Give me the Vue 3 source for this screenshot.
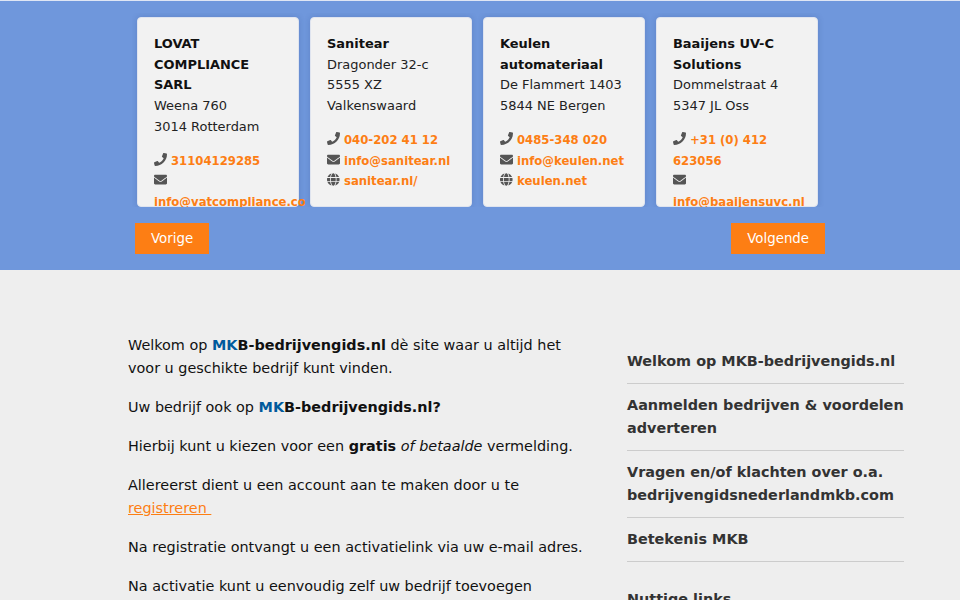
<script setup>
const phone = 'M493.4 24.6l-104-24c-11.3-2.6-22.9 3.3-27.5 13.9l-48 112c-4.2 9.8-1.4 21.3 6.9 28l60.6 49.6c-36 76.7-98.9 140.5-177.2 177.2l-49.6-60.6c-6.8-8.3-18.2-11.1-28-6.9l-112 48C3.9 366.5-2 378.1.6 389.4l24 104C27.1 504.2 36.7 512 48 512c256.1 0 464-207.5 464-464 0-11.2-7.7-20.9-18.6-23.4z'
const mail = 'M502.3 190.8c3.9-3.1 9.7-.2 9.7 4.7V400c0 26.5-21.5 48-48 48H48c-26.5 0-48-21.5-48-48V195.6c0-5 5.7-7.8 9.7-4.7 22.4 17.4 52.1 39.5 154.1 113.6 21.1 15.4 56.7 47.8 92.2 47.6 35.7.3 72-32.8 92.3-47.6 102-74.1 131.6-96.3 154-113.7zM256 320c23.2.4 56.6-29.2 73.4-41.4 132.7-96.3 142.8-104.7 173.4-128.7 5.8-4.5 9.2-11.5 9.2-18.9v-19c0-26.5-21.5-48-48-48H48C21.5 64 0 85.5 0 112v19c0 7.4 3.4 14.3 9.2 18.9 30.6 23.9 40.7 32.4 173.4 128.7 16.8 12.2 50.2 41.8 73.4 41.4z'
const globe = 'M336.5 160C322 70.7 287.8 8 248 8s-74 62.7-88.5 152h177zM152 256c0 22.2 1.2 43.5 3.3 64h185.3c2.1-20.5 3.3-41.8 3.3-64s-1.2-43.5-3.3-64H155.3c-2.1 20.5-3.3 41.8-3.3 64zm324.7-96c-28.6-67.9-86.5-120.4-158-141.6 24.4 33.8 41.2 84.7 50 141.6h108zM177.2 18.4C105.8 39.6 47.8 92.1 19.3 160h108c8.7-56.9 25.5-107.8 49.9-141.6zM487.4 192H372.7c2.1 21 3.3 42.5 3.3 64s-1.2 43-3.3 64h114.6c5.5-20.5 8.6-41.8 8.6-64s-3.1-43.5-8.5-64zM120 256c0-21.5 1.2-43 3.3-64H8.6C3.2 212.5 0 233.8 0 256s3.2 43.5 8.6 64h114.6c-2-21-3.2-42.5-3.2-64zm39.5 96c14.5 89.3 48.7 152 88.5 152s74-62.7 88.5-152h-177zm159.3 141.6c71.4-21.2 129.4-73.7 158-141.6h-108c-8.8 56.9-25.6 107.8-50 141.6zM19.3 352c28.6 67.9 86.5 120.4 158 141.6-24.4-33.8-41.2-84.7-50-141.6h-108z'

const cards = [
  { name: 'LOVAT COMPLIANCE SARL', addr: ['Weena 760', '3014 Rotterdam'], tel: '31104129285', mail: 'info@vatcompliance.com' },
  { name: 'Sanitear', addr: ['Dragonder 32-c', '5555 XZ Valkenswaard'], tel: '040-202 41 12', mail: 'info@sanitear.nl', web: 'sanitear.nl/' },
  { name: 'Keulen automateriaal', addr: ['De Flammert 1403', '5844 NE Bergen'], tel: '0485-348 020', mail: 'info@keulen.net', web: 'keulen.net' },
  { name: 'Baaijens UV-C Solutions', addr: ['Dommelstraat 4', '5347 JL Oss'], tel: '+31 (0) 412 623056', mail: 'info@baaijensuvc.nl' }
]
const links = [
  'Welkom op MKB-bedrijvengids.nl',
  'Aanmelden bedrijven & voordelen adverteren',
  'Vragen en/of klachten over o.a. bedrijvengidsnederlandmkb.com',
  'Betekenis MKB'
]
</script>

<template>
  <div class="page">
    <section class="hero">
      <div class="slides">
        <div v-for="c in cards" :key="c.name" class="slide">
          <article class="card">
            <strong class="name">{{ c.name }}</strong>
            <div v-for="a in c.addr" :key="a">{{ a }}</div>
            <div class="contact">
              <div>
                <svg class="icon" viewBox="0 0 512 512" preserveAspectRatio="xMinYMid"><path :d="phone" /></svg>
                <a>{{ c.tel }}</a>
              </div>
              <div>
                <svg class="icon" viewBox="0 0 512 512" preserveAspectRatio="xMinYMid"><path :d="mail" /></svg>
                <a>{{ c.mail }}</a>
              </div>
              <div v-if="c.web">
                <svg class="icon" viewBox="0 0 496 512" preserveAspectRatio="xMinYMid"><path :d="globe" /></svg>
                <a>{{ c.web }}</a>
              </div>
            </div>
          </article>
        </div>
      </div>
      <div class="nav">
        <button class="btn">Vorige</button>
        <button class="btn">Volgende</button>
      </div>
    </section>

    <main class="main">
      <div class="intro">
        <p>Welkom op <b><span class="mk">MK</span>B-bedrijvengids.nl</b> dè site waar u altijd het voor u geschikte bedrijf kunt vinden.</p>
        <p>Uw bedrijf ook op <b><span class="mk">MK</span>B-bedrijvengids.nl?</b></p>
        <p>Hierbij kunt u kiezen voor een <b>gratis</b> <i>of betaalde</i> vermelding.</p>
        <p>Allereerst dient u een account aan te maken door u te <a class="reg">registreren&nbsp;</a></p>
        <p>Na registratie ontvangt u een activatielink via uw e-mail adres.</p>
        <p>Na activatie kunt u eenvoudig zelf uw bedrijf toevoegen</p>
      </div>
      <aside class="side">
        <a v-for="l in links" :key="l" class="link">{{ l }}</a>
        <h4 class="side-title">Nuttige links</h4>
      </aside>
    </main>
  </div>
</template>

<style>
body { margin: 0; }
</style>

<style scoped>
.page {
  height: 600px;
  overflow: hidden;
  background: #eeeeee;
  font-family: "DejaVu Sans", sans-serif;
  color: #111;
}
.hero {
  height: 270px;
  box-sizing: border-box;
  padding-top: 12px;
  background: #6f97dc;
  border-top: 1px solid #dfe6f4;
  display: flex;
  flex-direction: column;
  align-items: center;
}
.slides {
  display: grid;
  grid-template-columns: repeat(4, 173px);
  margin-left: -4px;
}
.slide {
  padding: 4px 6px 0 5px;
  overflow: hidden;
  height: 194px;
  box-sizing: border-box;
}
.card {
  box-sizing: border-box;
  height: 190px;
  padding: 16px 16px 0;
  background: #f2f2f2;
  border: 1px solid #dfe4ef;
  border-radius: 4px;
  box-shadow: 0 0 6px rgba(30, 50, 110, 0.18);
  font-size: 12.96px;
  line-height: 20.74px;
  color: #222;
}
.name { display: block; color: #111; }
.contact { margin-top: 13px; font-weight: 700; font-size: 11.66px; }
.contact a { color: #fd7e14; }
.icon { height: 13px; width: 14px; fill: #555; vertical-align: -1px; margin-right: 3px; }
.nav {
  width: 690px;
  margin-top: 16px;
  display: flex;
  justify-content: space-between;
}
.btn {
  height: 31px;
  padding: 0 16px;
  background: #fd7e14;
  color: #fff;
  border: 0;
  font: 13.33px "DejaVu Sans", sans-serif;
}
.main {
  display: flex;
  padding: 64px 56px 0 128px;
  gap: 40px;
}
.intro { flex: 0 0 459px; font-size: 14.4px; line-height: 23.04px; }
.intro p { margin: 0 0 16px; }
.mk { color: #005a9c; }
.reg { color: #fd7e14; text-decoration: underline; }
.side { flex: 1; padding-top: 5.5px; font-size: 14.4px; line-height: 23.04px; font-weight: 700; color: #333; }
.link { display: block; padding: 10px 0; border-bottom: 1px solid #ccc; }
.side-title { margin: 26px 0 0; font-size: 14.4px; }
</style>
